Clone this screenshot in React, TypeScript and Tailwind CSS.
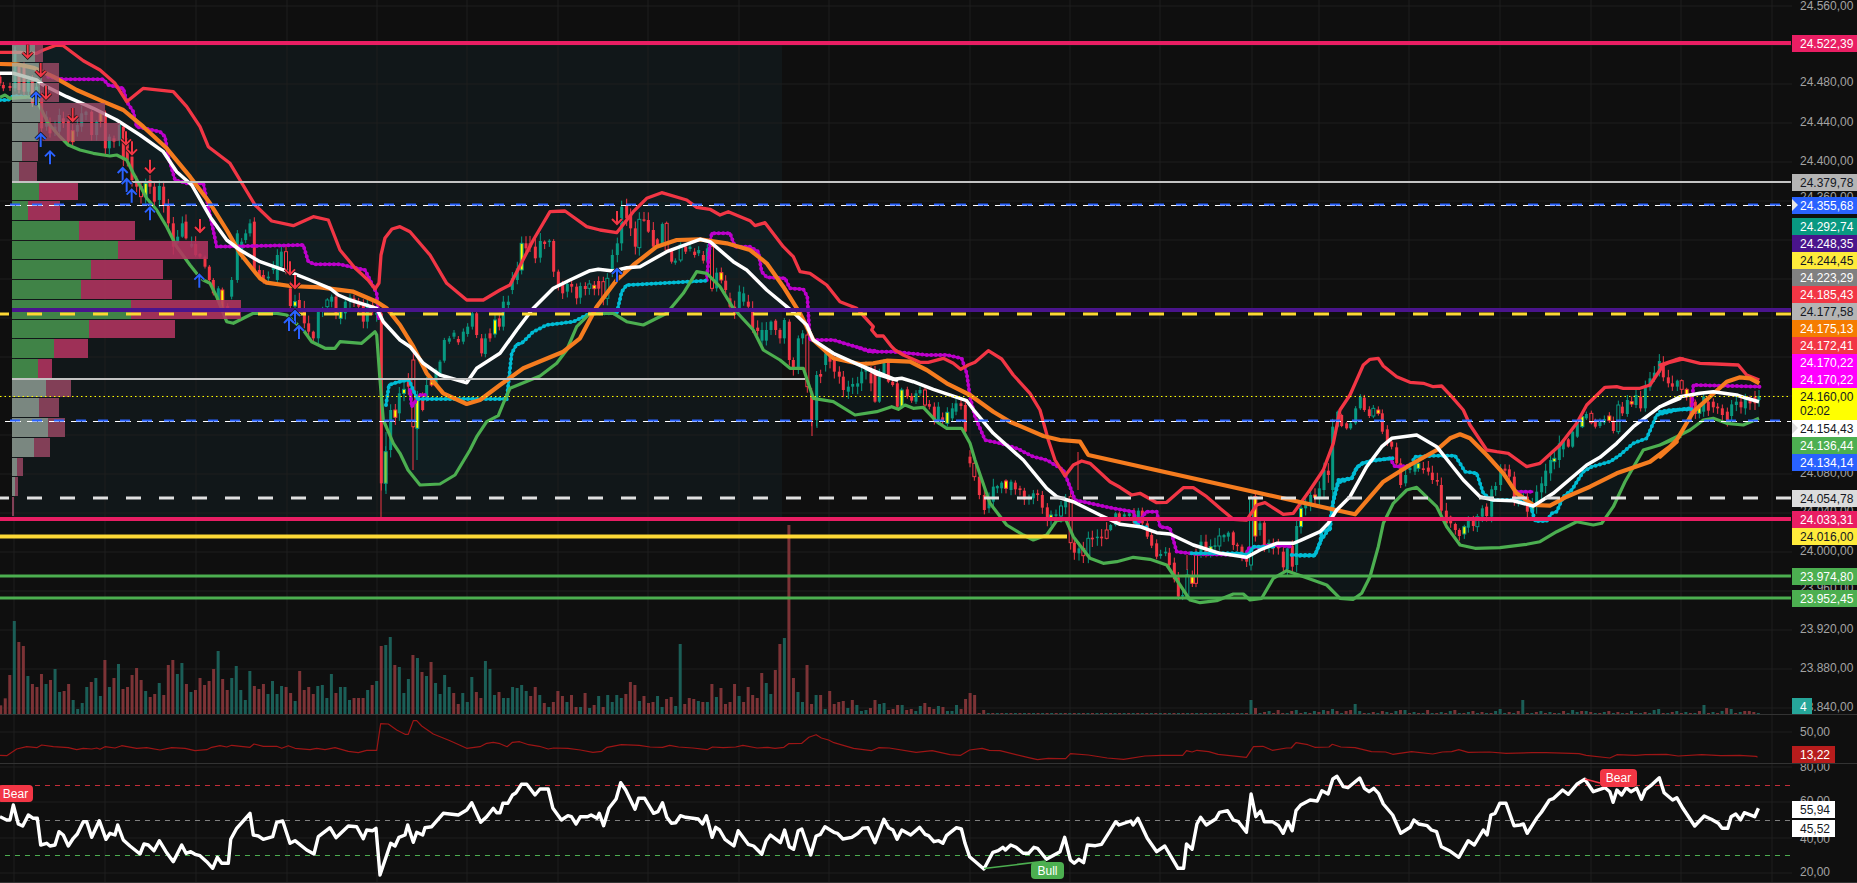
const font = "font-['Liberation_Sans',Arial,sans-serif]"

type Pt = [number, number]

// points were read from crops of the chart, so each run keeps its crop origin and scale
function pts(ox: number, sx: number, oy: number, sy: number, raw: number[]): Pt[] {
  const out: Pt[] = []
  for (let i = 0; i < raw.length; i += 2) out.push([ox + raw[i] / sx, oy + raw[i + 1] / sy])
  return out
}

const str = (p: Pt[]) => p.map(([x, y]) => `${x.toFixed(1)},${y.toFixed(1)}`).join(" ")

const redBand: Pt[] = [
  ...pts(0, 3, 20, 3, [0,97,60,97,110,100,130,90,170,75,190,77,250,122,300,150,345,190,380,245,430,205,520,215,560,260,600,320,625,380,690,430,765,555,815,603,880,617,940,590,985,600,1020,690]),
  ...pts(0, 1, 0, 1, [355,268,368,280,375,289,379,283,381,255,385,238,392,229]),
  ...pts(400, 3, 150, 3, [0,230,30,245,90,315,140,400,200,450,250,450,300,420,330,405,400,270,450,185,495,183,560,230,600,240,650,248,700,185,740,145,785,128,860,150,890,172,930,178,960,195,985,185,1050,212,1065,227,1095,218,1150,290,1180,320,1200,365,1230,370,1280,405,1320,455,1370,475,1420,530]),
  ...pts(860, 3, 330, 3, [35,0,50,18,70,18,95,50,105,60,130,75,180,97,205,97,250,85,280,100,302,118,325,105,345,97,385,62,425,87,460,135,510,190,540,240,565,330,585,390]),
  ...pts(900, 3, 380, 3, [495,288,520,255,545,243,570,250,630,305,660,322,695,345,720,340,770,368,800,367,825,345,850,323,880,323,920,350,960,385,1000,418,1040,420,1070,375,1095,368,1150,403,1180,400]),
  ...pts(1300, 3, 300, 3, [30,570,70,510,100,430,120,330,150,285,190,195,210,178,235,175,250,198,290,230,330,247,370,250,400,260,425,258,455,290,490,330,510,375,560,450,590,455,625,460,680,500,720,490,780,435,830,370,860,315,915,262,950,260,970,265,1020,265,1050,255,1090,195,1130,178,1150,177]),
  ...pts(1660, 3, 290, 3, [0,225,60,205,120,220,170,222,235,225,260,255,298,270]),
]

const greenBand: Pt[] = [
  ...pts(0, 3, 20, 3, [0,232,15,225,30,235,100,230,120,260,145,310,180,350,205,375,240,390,280,400,330,408,350,405,380,420,400,460,440,535,470,570,500,620,530,680,570,735,598,770]),
  ...pts(0, 3, 280, 3, [610,0,630,10,650,50,680,125,700,130,760,100,830,100,860,105,910,150,935,185,975,205,1005,205,1020,185,1085,190,1125,155,1130,165,1140,300,1150,420,1180,490,1200,520]),
  ...pts(0, 1, 0, 1, [408,470,420,485,440,484,455,475]),
  ...pts(400, 3, 150, 3, [210,900,230,860,260,815,295,797,310,760,330,715,420,678,470,640,500,600,530,530,570,490,640,490,680,515,730,525,800,490,850,430,890,365,920,370,960,410,1000,475,1060,540,1090,600,1140,630,1170,655,1210,655,1240,745,1300,755,1365,795,1430,785,1475,770]),
  ...pts(860, 3, 330, 3, [115,238,135,225,160,235,190,232,230,275,260,295,305,295,330,340,345,390]),
  ...pts(900, 3, 380, 3, [270,370,320,435,370,465,400,480,440,465,470,422,497,418,520,470,570,535,610,550,650,545,700,532,750,538,800,555,830,600,870,660,900,668,950,662,1000,642,1030,642,1050,660,1085,655,1120,595,1160,572,1230,597,1280,615,1320,655,1360,658,1385,640,1410,590]),
  ...pts(1300, 3, 300, 3, [235,740,250,670,280,610,320,570,350,562,410,620,440,680,480,735,525,745,600,743,680,733,720,725,770,695,830,665,880,675,905,670,940,620,975,545,1030,450,1080,435,1140,410]),
  ...pts(1660, 3, 290, 3, [0,465,50,440,90,420,130,390,160,385,200,400,250,405,297,385]),
]

const whiteMa: Pt[] = [
  ...pts(0, 3, 20, 3, [0,160,40,160,110,180,130,195,200,230,280,265,350,300,420,345,490,395,530,455,575,495,630,590,680,660,720,690,780,725,880,760]),
  ...pts(0, 3, 280, 3, [930,0,990,25,1015,45,1050,60,1130,85,1150,125]),
  ...pts(400, 3, 150, 3, [0,570,30,590,70,640,120,675,200,698,230,655,300,610,350,540,400,475,460,415,510,390,570,362,595,358,640,363,680,353,720,350,800,305,900,268,930,275,1000,335,1040,360,1100,420,1170,478,1220,525,1240,570,1300,610,1400,655,1440,675,1490,690]),
  ...pts(860, 3, 330, 3, [0,105,50,132,100,148,125,145,160,155,220,178,300,205,320,212,345,245,400,310,490,390]),
  ...pts(900, 3, 380, 3, [440,325,470,350,520,365,600,405,660,433,720,440,770,458,810,462,880,495,960,520,1040,532,1080,510,1130,490,1180,490]),
  ...pts(1300, 3, 300, 3, [0,722,60,695,85,670,110,630,150,590,200,500,245,440,275,415,350,405,410,440,490,540,540,590,580,600,640,602,700,618,760,580,860,495,900,472,950,430,1000,380,1080,320,1140,295]),
  ...pts(1660, 3, 290, 3, [0,350,60,320,120,310,160,305,230,315,260,325,297,335]),
]

const orangeMa: Pt[] = [
  ...pts(0, 3, 20, 3, [0,132,50,133,100,143,160,170,230,210,310,245,370,270,430,320,500,385,570,470,630,550,680,630,720,700,780,775]),
  ...pts(0, 3, 280, 3, [800,8,870,18,960,22,1060,35,1130,65,1160,85]),
  ...pts(400, 3, 150, 3, [0,525,40,590,80,670,130,730,200,762,240,750,300,705,370,655,430,630,490,605,540,565,590,470,650,390,700,345,770,290,830,270,900,268,980,280,1050,300,1100,340,1150,410,1200,490,1240,570,1300,625,1380,642,1420,640]),
  ...pts(860, 3, 330, 3, [80,92,150,95,200,120,260,160,330,195,400,245,450,275,550,318,600,330]),
  ...pts(900, 3, 380, 3, [540,185,565,225,1365,403]),
  ...pts(1300, 3, 300, 3, [250,545,330,495,410,450,450,415,480,403,510,415,560,465,610,520,650,580,700,615,750,617,800,590,870,560,950,520,1050,485,1130,425]),
  ...pts(1660, 3, 290, 3, [0,500,50,450,100,365,150,320,200,275,240,262,270,265,298,280]),
]

const cyanRuns: Pt[][] = [
  pts(0, 3, 20, 3, [0,240,25,240,40,228,100,232]),
  [[386, 405], [389, 385], [398, 382], [409, 380], [417, 399], [507, 399]],
  pts(400, 3, 150, 3, [320,748,335,610,350,583,365,580,400,545,440,525,520,515,570,490,650,490,665,425,680,405,920,392]),
  pts(900, 3, 380, 3, [705,425,720,440,740,442]),
  pts(900, 3, 380, 3, [875,520,1020,520,1045,525,1060,500,1125,500]),
  pts(900, 3, 380, 3, [1175,525,1245,525,1260,490,1265,452,1290,450,1300,360,1315,300,1355,295,1370,262,1385,252,1420,240,1480,235]),
  pts(1300, 3, 300, 3, [0,767,45,767,60,725,85,690,100,605,115,548,155,535,170,505,185,490,215,483,275,475]),
  pts(1300, 3, 300, 3, [340,480,345,470,400,467,465,467,480,490,495,515,530,520,550,580,575,600,640,600,690,610,705,663,740,663,755,640,770,635,790,590,815,570,850,515,875,500,930,485,960,465,1000,430,1040,415,1070,345,1130,330,1170,325]),
  pts(1660, 3, 290, 3, [0,365,30,360,95,358]),
]

const purpleRuns: Pt[][] = [
  pts(0, 3, 20, 3, [145,170,190,178,310,178,325,195,370,205,380,245,400,275,410,320,480,335,495,350,505,410,525,480,560,490,610,490,650,680,910,675,925,725,945,733,1020,733,1095,750,1130,820,1136,900]),
  pts(400, 3, 150, 3, [30,720,35,770,60,735,75,735]),
  pts(400, 3, 150, 3, [920,390,930,280,935,250,990,250,1005,290,1050,290,1075,305,1085,365,1100,382,1155,385,1170,415,1210,418,1222,440,1230,570,1300,570,1400,600,1430,603]),
  [
    ...pts(860, 3, 330, 3, [0,55,30,65,100,65,200,75,260,75,305,85,320,130,330,200,345,260,360,295,375,330,420,340,470,355,520,380,560,390]),
    ...pts(900, 3, 380, 3, [490,270,510,320,525,360,640,385,700,395,712,435,738,395,770,395,780,440,810,445,830,515,890,522,1020,525,1035,535,1045,505,1120,495,1175,500]),
  ],
  pts(1300, 3, 300, 3, [270,475,285,500,330,497]),
  pts(1300, 3, 300, 3, [650,575,700,575]),
  pts(1660, 3, 290, 3, [95,370,100,285,300,290]),
]

const rsi: Pt[] = [
  ...pts(0, 3, 600, 3, [0,650,20,660,30,660,40,615,55,672,68,678,85,645,100,655,112,655,122,735,140,730,150,738,165,735,177,695,190,705,205,738,220,715,232,702,250,665,260,665,275,712,298,662,318,718,330,700,345,705,353,675,370,720,390,738,420,762,432,732,445,735,462,752,478,722,498,755,520,785,545,735,558,760,572,755,585,763,600,767,620,785,638,805,652,772,665,790,685,790,692,718,710,685,750,640,760,705,775,708,790,718,818,710,830,667,848,663,870,730,885,722,920,750,942,762,955,710,990,683,1008,713,1045,678,1070,680,1090,716,1100,690,1118,692,1128,685,1140,825,1172,730,1185,738,1197,712,1215,705,1223,675,1240,727,1250,697,1268,705,1275,683,1295,680,1330,640,1375,645,1400,630,1415,608,1442,667,1460,650,1480,625,1490,638]),
  ...pts(500, 2.8, 600, 3, [0,638,8,610,22,610,35,585,45,578,60,553,75,553,98,585,112,567,135,567,148,625,172,660,190,647,200,650,213,672,225,650,245,650,255,645,272,655,278,640,290,677,305,625,325,597,338,548,352,570,378,628,388,595,405,595,430,640,442,635,455,608,467,652,480,670,492,668,505,647,520,652,540,655,555,657,567,672,578,647,594,712,604,682,615,690,630,718,655,738,667,692,695,733,710,738,733,763,745,722,757,705,785,728,797,690,810,740,822,748,835,692,845,687,870,765,885,708,897,703,910,680,935,697,945,700,960,717,985,712,1002,700,1015,685,1030,683,1050,728,1075,658,1088,683,1100,690,1112,718,1125,690,1150,705,1175,682,1190,703,1200,707,1215,725,1228,722,1240,730,1250,707,1278,683,1292,687,1302,730,1315,770,1355,807,1380,757,1395,752,1408,742,1415,750,1430,735,1445,742,1465,760,1480,760,1495,742,1505,745,1530,778]),
  ...pts(1060, 2.119, 600, 3, [0,755,10,712,22,780,30,790,40,778,50,788,58,735,75,737,88,733,105,695,118,665,125,675,150,663,155,675,165,655,185,715,205,755,222,738,250,805,262,805,268,732,280,748,290,672,298,652,310,675,330,657,338,637,355,632,367,660,378,665,395,697,405,582,415,650,425,633,433,665,450,665,463,677,473,700,483,665,492,692,500,632,510,615,530,600,545,603,555,572,568,582,578,537,587,529,600,560,610,563,635,534,645,565,655,575,665,565,675,580,685,612,705,645,722,700,742,682,750,660,760,672,778,677,787,690,798,695,808,740,825,752,845,772,865,722,878,735,897,690,905,705,913,645,922,640,932,610,945,610,962,677,975,675,982,672,990,700,1010,655,1020,637,1037,600,1045,596,1065,570,1077,583,1095,553,1112,538,1130,575,1155,563,1165,575,1172,607,1180,570,1190,585,1200,563,1210,575,1222,565,1232,598,1240,570,1255,553,1270,533,1280,578,1298,600,1307,593,1320,625,1345,678,1365,648,1380,658,1395,670,1403,685,1415,685,1422,650,1432,642,1442,660,1450,638,1472,650,1480,625]),
]

const atr: Pt[] = [
  ...pts(0, 3, 600, 3, [0,466,20,467,50,447,80,440,110,443,125,435,160,440,205,443,230,449,250,445,275,447,290,444,300,448,315,440,345,444,365,437,410,445,440,443,480,450,515,443,555,445,585,452,620,449,635,442,660,437,680,441,695,436,750,442,762,432,790,439,830,439,845,445,865,437,885,445,930,449,950,445,975,449,1005,443,1045,454,1075,458,1100,451,1130,451,1142,371,1165,372,1190,390,1215,403,1225,403,1240,362,1250,362,1265,378,1300,402,1350,422,1400,445,1440,440,1460,430,1480,427]),
  ...pts(500, 2.8, 600, 3, [0,431,20,440,35,427,55,425,80,434,110,439,135,447,150,444,190,445,225,450,260,457,285,454,300,442,340,434,390,436,420,441,455,442,475,436,500,441,540,444,580,449,595,441,625,443,660,441,680,436,720,444,750,442,770,445,795,442,808,431,845,430,865,412,885,404,900,414,920,420,935,428,990,445,1040,452,1060,443,1090,444,1165,457,1210,452,1260,464,1290,466,1315,450,1350,445,1370,451,1400,452,1480,473,1505,479,1535,475]),
  ...pts(1060, 2.119, 600, 3, [0,476,12,476,22,461,60,465,100,474,135,478,180,468,215,466,260,466,268,452,280,456,290,451,315,455,335,463,395,472,410,440,430,439,450,451,480,444,490,444,500,428,525,434,540,442,570,441,577,433,595,441,625,443,660,455,690,456,705,463,745,455,790,462,810,456,830,455,845,449,865,457,910,456,945,460,1000,458,1030,458,1100,461,1115,466,1165,474,1180,464,1220,466,1240,464,1285,463,1310,468,1360,464,1400,467,1440,466,1475,469,1478,472]),
]

// body runs: crop x, body top, body bottom, kind
// r g filled, R G hollow, y yellow body in green, o yellow body in red
const candleRuns: { ox: number; oy: number; s: string }[] = [
  { ox: 0, oy: 20, s: "0,170,190,r 10,195,205,r 30,198,204,r 45,90,205,g 57,140,210,r 72,140,215,r 85,180,215,g 97,180,250,r 110,200,240,g 125,230,325,r 140,290,320,g 150,310,340,r 165,320,335,g 178,285,335,g 190,295,310,r 205,303,365,r 218,332,365,o 232,315,335,g 245,280,320,g 258,275,285,g 275,275,345,r 290,305,345,g 302,280,305,o 316,278,385,r 328,350,385,g 342,355,365,r 358,315,360,g 370,320,420,r 382,365,420,r 396,410,480,r 410,480,500,r 423,500,530,R 437,490,530,y 450,480,500,r 463,500,545,r 478,498,540,g 491,500,555,r 505,555,610,r 520,610,680,r 533,650,668,g 547,610,650,g 558,605,655,r 575,672,680,g 587,672,705,r 600,702,710,r 615,710,740,r 628,740,780,r" },
  { ox: 0, oy: 280, s: "640,0,40,r 655,25,60,g 667,30,85,o 683,78,84,r 695,0,50,g 712,-140,0,g 725,-115,-70,g 737,-140,-120,g 750,-170,-140,g 763,-175,-30,r 778,-30,-10,r 790,-15,0,r 805,-10,-5,g 820,-40,-30,g 832,-75,0,g 844,-85,-40,g 858,-85,-30,R 871,25,78,r 885,65,78,y 898,60,85,r 913,85,130,r 926,130,155,r 940,155,175,r 955,95,175,g 968,85,95,g 982,60,80,G 995,50,65,g 1008,50,100,r 1022,95,115,y 1036,65,100,g 1050,52,65,g 1062,55,62,r 1076,65,80,r 1090,70,125,r 1102,70,125,g 1118,75,85,r 1130,98,104,g 1144,100,610,r 1157,515,610,y 1172,390,510,g 1186,390,412,o 1198,340,400,g" },
  { ox: 400, oy: 150, s: "12,718,730,y 25,690,710,r 40,630,830,R 52,745,835,y 68,750,780,r 80,705,750,g 95,695,705,o 108,660,705,g 120,635,675,g 133,570,632,g 148,565,575,g 162,548,560,g 175,567,577,r 190,545,575,g 203,530,552,g 217,490,530,g 230,490,555,r 245,565,610,r 256,565,612,g 270,550,565,r 285,510,552,y 298,505,530,r 310,455,530,g 325,455,465,g 337,385,420,g 352,355,390,g 365,280,360,y 378,280,295,r 390,280,292,r 406,290,325,r 421,273,323,g 434,275,282,r 448,272,275,g 461,273,365,r 475,365,405,r 488,400,430,r 502,402,425,g 515,402,410,r 530,410,445,r 541,408,443,g 556,408,417,r 568,402,415,G 583,406,416,o 596,393,416,r 610,395,445,R 622,385,445,G 637,315,360,g 652,280,315,g 665,170,280,g 680,165,205,r 692,195,235,r 706,235,290,r 718,208,293,G 732,208,212,r 745,210,245,r 760,240,290,r 772,268,285,r 787,222,280,g 800,220,300,R 815,300,335,r 826,332,338,g 842,285,330,G 857,290,305,r 870,290,297,g 884,305,315,r 896,300,310,g 910,315,332,r 922,295,335,g 936,290,415,R 950,368,415,g 964,368,390,o 977,392,420,r 990,445,470,r 1004,470,495,r 1018,425,475,g 1031,430,455,g 1045,455,470,r 1058,475,535,r 1073,533,543,r 1086,540,572,g 1099,540,572,g 1113,515,540,g 1127,512,540,r 1140,540,565,r 1153,510,565,g 1168,515,630,r 1180,630,660,r 1195,565,655,g 1208,550,565,g 1222,555,710,R 1235,725,810,r 1250,675,810,g 1262,672,680,r 1277,610,645,g 1290,610,635,r 1303,630,665,r 1318,665,680,r 1330,680,720,r 1345,710,725,g 1358,702,710,g 1373,700,710,g 1385,665,700,g 1398,655,665,g 1413,670,700,r 1425,670,755,r 1438,680,755,g 1452,630,670,g 1465,635,695,r 1478,695,705,r 1492,700,770,r" },
  { ox: 900, oy: 380, s: "5,30,80,y 22,28,50,r 35,48,62,r 48,40,65,g 60,30,40,g 75,30,75,R 88,72,80,r 103,80,125,r 115,80,125,g 128,112,125,r 142,97,130,y 157,85,115,g 168,70,95,g 183,70,78,r 196,75,155,r 210,230,250,r 223,250,290,R 238,290,345,r 253,345,390,r 267,360,385,g 280,320,365,g 292,318,325,g 305,308,325,g 318,303,325,o 333,305,330,g 346,308,328,r 360,325,330,r 373,332,358,r 387,353,357,g 400,340,355,g 413,340,345,r 427,345,383,r 442,382,420,r 453,405,418,y 468,403,407,g 483,378,408,G 497,358,382,g 512,350,488,R 523,488,518,r 537,505,520,g 550,505,527,R 565,475,527,G 577,473,478,r 592,470,474,g 605,470,475,r 620,450,475,R 632,435,450,g 647,400,435,g 658,400,425,r 673,403,410,g 688,400,408,g 702,392,430,r 715,392,430,g 727,392,430,r 742,430,470,r 755,465,497,r 770,490,530,r 782,522,528,g 797,515,520,g 808,518,555,r 823,548,598,r 835,592,650,r 848,645,650,g 862,585,650,G 877,590,610,o 888,525,610,R 903,485,522,g 918,485,520,r 932,500,520,y 945,496,500,g 958,468,498,G 972,465,472,g 985,458,470,g 1000,457,495,r 1012,494,498,r 1026,500,528,r 1040,525,545,r 1053,355,555,G 1066,350,468,o 1080,430,450,g 1093,428,498,r 1107,490,500,y 1120,488,505,r 1135,490,505,r 1150,515,562,r 1162,505,568,g 1177,497,560,r 1190,438,555,g" },
  { ox: 1300, oy: 300, s: "3,625,680,y 17,610,625,g 32,585,612,g 45,585,592,o 58,565,595,g 72,510,570,g 85,512,525,r 98,380,570,g 113,335,380,g 125,345,378,r 140,370,385,r 152,370,385,g 167,325,370,g 181,290,325,g 193,293,330,r 208,328,348,r 220,325,348,G 235,330,340,o 247,340,395,r 262,388,430,r 275,425,440,r 290,442,490,r 302,490,555,r 317,525,550,g 330,503,510,g 345,485,515,g 355,490,505,y 370,505,510,r 385,503,515,r 397,518,540,r 412,540,545,r 424,555,632,r 439,632,670,r 452,650,670,r 466,672,690,r 478,690,708,r 493,680,702,y 505,655,683,g 520,655,678,r 532,650,680,G 547,625,650,g 560,620,648,r 575,568,650,g 587,558,570,g 602,505,555,g 615,506,512,r 628,508,530,r 643,530,598,r 655,595,600,g 670,588,593,g 682,590,635,r 697,612,632,y 710,575,620,g 725,550,577,g 737,512,558,g 752,480,520,g 763,475,485,y 778,430,480,g 790,420,448,g 805,418,440,r 818,395,440,g 832,370,410,g 847,350,380,y 859,342,355,g 874,340,368,R 886,365,380,r 900,365,378,g 913,357,368,g 928,348,362,o 940,362,393,r 955,315,395,G 967,320,340,r 982,300,342,g 995,305,312,o 1008,285,315,g 1022,290,325,r 1036,260,325,g 1050,235,262,g 1063,218,235,g 1078,183,218,g" },
  { ox: 1660, oy: 290, s: "10,220,262,r 25,262,280,r 37,280,290,r 52,272,290,g 65,272,298,R 80,298,318,o 93,320,375,r 106,335,372,r 118,350,370,y 131,320,365,g 145,335,362,r 160,335,352,r 173,350,355,r 187,355,375,r 202,365,392,r 215,343,378,g 229,335,345,g 243,335,352,r 256,327,355,g 270,333,340,r 285,320,340,r 297,318,330,g" },
]

const extraWicks: [number, number, number, string][] = [
  [381, 483, 517, "#f23645"], [386, 432, 494, "#089981"], [413, 427, 470, "#f23645"], [417, 428, 460, "#089981"],
  [812, 420, 436, "#f23645"], [817, 420, 428, "#089981"], [1078, 452, 490, "#f23645"], [1187, 555, 570, "#f23645"],
]

const GREEN = "#089981"
const RED = "#f23645"

function Candles() {
  let n = 0
  const out: React.ReactNode[] = []
  candleRuns.forEach((run) => {
    run.s.split(" ").forEach((c) => {
      const [sx, sa, sb, k] = c.split(",")
      const x = run.ox + Number(sx) / 3
      const a = run.oy + Number(sa) / 3
      const b = run.oy + Number(sb) / 3
      n++
      const r1 = ((n * 9301 + 49297) % 233280) / 233280
      const r2 = ((n * 4561 + 51349) % 233280) / 233280
      const line = k === "r" || k === "R" || k === "o" ? RED : GREEN
      const fill = k === "r" ? RED : k === "g" ? GREEN : k === "y" || k === "o" ? "#ffff00" : "none"
      out.push(
        <g key={n}>
          <line x1={x} x2={x} y1={a - 1 - r1 * 7} y2={b + 1 + r2 * 7} stroke={line} strokeWidth="1" />
          <rect x={x - 1.5} y={a} width="3" height={Math.max(b - a, 1.5)} fill={k === "R" || k === "G" ? "#0f1518" : fill} stroke={k === "r" || k === "g" ? "none" : line} strokeWidth="1" />
        </g>,
      )
    })
  })
  return <g>{out}</g>
}

// volume, left to right at a 4.53px pitch: top of bar as read in the crop, then colour
const volA = "r316 r295 r225 g63 r126 r138 g228 r252 r261 r222 g252 r240 g207 g276 r273 r252 g300 g327 g309 g261 r246 g234 g288 r180 g261 r234 g192 r267 r261 r225 r204 r240 g273 r291 r282 g249 r285 r195 r180 g222 g189 r252 g276 r270 r234 r255 r243 r207 g153 r237 r270 g234 g198 g270 g300 g213 r258 r267 r252 g282 g243 g282 g258 r261 r279 g303 r213 r270 r261 r282 g258 g255 g294 g222 r279 g261 g261 g300 r294 r294 r294 g270 r255 g243 r138 g135 g111 r195 g201 g279 g237 r165 g174 r216 g228 r186 g249 g282 g225 g261 r279 r312 g279 g306 g231 r276 r294 g183 g207 g285 r276"
const volB = "g294 g294 g261 g264 g255 g273 r288 r261 g285 r309 g321 r306 r273 r288 g306 r285 r321 g321 r279 g324 r315 g288 r321 g285 g306 g285 g294 r282 r246 r255 g303 r288 r309 r306 g288 g321 r297 r291 g318 g132 r312 r294 r297 g303 r306 g306 r252 g291 r264 r312 r306 r252 g288 r306 r261 r285 r294 r219 g249 g282 r210 r132 g114 r-225 r234 g276 g306 r195 r312 g285 r285 g327 r273 r312 r306 r303 g324 r300 g315 g333 g330 r324 r300 g312 g309 r330 r327 r315 g315 r330 r327 g333 g318 r309 r321 r327 g318 r321 g333 g333 g315 r327 r297 r279 r285 r339 r330"

const volTail: Record<number, [string, number]> = {
  1250: ["g", 14], 1255: ["r", 6], 1277: ["r", 4], 1291: ["r", 3], 1296: ["g", 4], 1323: ["g", 4], 1327: ["r", 3], 1332: ["g", 5], 1346: ["r", 3], 1350: ["r", 4], 1355: ["g", 10], 1373: ["r", 2], 1396: ["g", 3], 1400: ["r", 4], 1405: ["g", 4], 1427: ["r", 4], 1454: ["r", 4], 1500: ["g", 5], 1522: ["g", 14], 1572: ["g", 4], 1581: ["r", 3], 1653: ["g", 4], 1658: ["g", 5], 1699: ["r", 3], 1704: ["g", 9], 1727: ["r", 6], 1731: ["g", 5], 1749: ["r", 3],
}

function Volume() {
  const out: React.ReactNode[] = []
  const bar = (i: number, x: number, top: number, c: string) =>
    out.push(<rect key={i} x={x - 1.5} y={top} width="3" height={714 - top} fill={c === "r" ? "#7c3336" : "#1b5e57"} />)
  let i = 0
  volA.split(" ").forEach((v) => {
    bar(i, 0.7 + i * 4.53, 600 + Number(v.slice(1)) / 3, v[0])
    i++
  })
  volB.split(" ").forEach((v) => {
    bar(i, 0.7 + i * 4.53, 600 + Number(v.slice(1)) / 3, v[0])
    i++
  })
  const tailKeys = Object.keys(volTail).map(Number)
  while (0.7 + i * 4.53 < 1759) {
    const x = 0.7 + i * 4.53
    const hit = tailKeys.find((k) => Math.abs(k - x) < 2.3)
    if (hit) bar(i, x, 714 - volTail[hit][1], volTail[hit][0])
    else bar(i, x, x < 1250 ? 713 : 713 - (i % 5 === 0 ? 2 : i % 3 === 0 ? 1 : 0), i % 2 ? "r" : "g")
    i++
  }
  return <g>{out}</g>
}

// volume profile rows: top, bottom, end of buy part, end of sell part, faded
const profile: [number, number, number, number, boolean][] = [
  [44, 62, 35, 43, true], [63, 82, 42, 59, true], [83, 102, 40, 59, true], [103, 122, 40, 105, true], [123, 141, 38, 120, true], [142, 161, 22, 38, true], [162, 181, 19, 37, true],
  [183, 200, 39, 78, false], [201, 220, 28, 60, false], [221, 240, 79, 135, false], [241, 259, 118, 208, false], [260, 279, 91, 163, false], [280, 299, 81, 172, false], [300, 319, 131, 241, false], [320, 338, 89, 175, false], [339, 358, 54, 88, false], [359, 378, 38, 52, false],
  [380, 397, 46, 71, true], [398, 417, 39, 59, true], [418, 437, 48, 65, true], [438, 457, 34, 50, true], [458, 476, 17, 23, true], [477, 496, 15, 18, true], [497, 516, 12, 14, true],
]

const arrows: [number, number, "u" | "d"][] = [
  ...([[83,95],[122,150],[138,218],[218,285],[378,355],[396,385],[450,440],[600,618],[870,745]] as Pt[]).map(([x, y]): [number, number, "d"] => [x / 3, 20 + y / 3, "d"]),
  ...([[108,235],[122,360],[150,412],[368,462],[380,495],[395,527],[450,580],[598,782]] as Pt[]).map(([x, y]): [number, number, "u"] => [x / 3, 20 + y / 3, "u"]),
  [295, 282, "d"], [295, 317, "u"], [289, 324, "u"], [299, 332, "u"],
  [617, 218, "d"], [617, 275, "u"],
]

function Arrow({ x, y, dir }: { x: number; y: number; dir: "u" | "d" }) {
  const d = dir === "d" ? `M${x} ${y - 7}V${y + 6}M${x - 5} ${y + 1}L${x} ${y + 6}L${x + 5} ${y + 1}` : `M${x} ${y + 7}V${y - 6}M${x - 5} ${y - 1}L${x} ${y - 6}L${x + 5} ${y - 1}`
  return (
    <g fill="none">
      <path d={d} stroke="#131313" strokeWidth="3.4" />
      <path d={d} stroke={dir === "d" ? "#f23645" : "#2962ff"} strokeWidth="2" />
    </g>
  )
}

const gridX = [14, 105, 196, 287, 377, 467, 558, 648, 739, 829, 970, 1070, 1160, 1252, 1319, 1409, 1500, 1591, 1681, 1772]
const gridY = [6, 45, 84, 123, 162, 201, 240, 279, 318, 357, 396, 435, 474, 513, 552, 591, 630, 669, 708]

function MainPane() {
  const band = str([...redBand, ...[...greenBand].reverse()])
  return (
    <svg viewBox="0 0 1792 714" className="block h-[714px] w-[1792px]">
      <rect x="12" y="45" width="770" height="472" fill="#111719" />
      <polygon points={band} fill="#0096c8" fillOpacity="0.05" />
      {gridX.map((x) => <line key={x} x1={x} x2={x} y1="0" y2="714" stroke="#1e1e1e" />)}
      {gridY.map((y) => <line key={y} x1="0" x2="1792" y1={y} y2={y} stroke="#1e1e1e" />)}
      <Volume />
      <Candles />
      {extraWicks.map(([x, a, b, c], i) => <line key={i} x1={x} x2={x} y1={a} y2={b} stroke={c} />)}
      {purpleRuns.map((r, i) => (
        <g key={i} fill="none" stroke="#bd00cc" strokeLinejoin="round">
          <polyline points={str(r)} strokeWidth="2.4" />
          <polyline points={str(r)} strokeWidth="4" strokeLinecap="round" strokeDasharray="0 4.5" />
        </g>
      ))}
      {cyanRuns.map((r, i) => (
        <g key={i} fill="none" stroke="#00bcd4" strokeLinejoin="round">
          <polyline points={str(r)} strokeWidth="2.4" />
          <polyline points={str(r)} strokeWidth="4" strokeLinecap="round" strokeDasharray="0 4.5" />
        </g>
      ))}
      <polyline points={str(greenBand)} fill="none" stroke="#4caf50" strokeWidth="3.2" strokeLinejoin="round" />
      <polyline points={str(redBand)} fill="none" stroke="#f23645" strokeWidth="3.3" strokeLinejoin="round" />
      <polyline points={str(orangeMa)} fill="none" stroke="#f57c1f" strokeWidth="4.2" strokeLinejoin="round" />
      <polyline points={str(whiteMa)} fill="none" stroke="#ffffff" strokeWidth="3.5" strokeLinejoin="round" />
      {profile.map(([a, b, g, p, faded], i) => (
        <g key={i}>
          <rect x="12" y={a} width={g - 12} height={b - a} fill={faded ? "#a3b3a8" : "#43894a"} fillOpacity={faded ? 0.72 : 0.95} />
          <rect x={g} y={a} width={p - g} height={b - a} fill={faded ? "#a84d6c" : "#b23460"} fillOpacity={faded ? 0.75 : 0.88} />
        </g>
      ))}
      <line x1="0" x2="1791" y1="43" y2="43" stroke="#e91e63" strokeWidth="4" />
      <line x1="0" x2="1791" y1="519" y2="519" stroke="#e91e63" strokeWidth="4" />
      <line x1="0" x2="1067" y1="536.5" y2="536.5" stroke="#fdd835" strokeWidth="4" />
      <line x1="0" x2="1791" y1="576" y2="576" stroke="#4caf50" strokeWidth="3" />
      <line x1="0" x2="1791" y1="598" y2="598" stroke="#4caf50" strokeWidth="3" />
      <line x1="12" x2="1791" y1="182" y2="182" stroke="#c4c4c4" strokeWidth="2" />
      <line x1="12" x2="805" y1="379" y2="379" stroke="#c4c4c4" strokeWidth="2" />
      <line x1="0" x2="1791" y1="396.5" y2="396.5" stroke="#ffff00" strokeWidth="1" strokeDasharray="1.5 3" />
      <line x1="0" x2="1791" y1="314" y2="314" stroke="#fdd835" strokeWidth="3" strokeDasharray="15 18" strokeDashoffset="6" />
      <line x1="12" x2="1791" y1="310" y2="310" stroke="#4a148c" strokeWidth="4" />
      <line x1="0" x2="1791" y1="498" y2="498" stroke="#e0e0e0" strokeWidth="3" strokeDasharray="15 18" strokeDashoffset="6" />
      {[205, 421].map((y) => (
        <g key={y}>
          <line x1="5" x2="1791" y1={y + 0.5} y2={y + 0.5} stroke="#ffffff" strokeWidth="1" strokeDasharray="10 1 5 6" />
          <line x1="0" x2="1791" y1={y - 0.5} y2={y - 0.5} stroke="#2962ff" strokeWidth="2" strokeDasharray="10 12" strokeDashoffset="-10" />
        </g>
      ))}
      {arrows.map(([x, y, dir], i) => <Arrow key={i} x={x} y={y} dir={dir} />)}
    </svg>
  )
}

function AtrPane() {
  return (
    <svg viewBox="0 715 1792 48" className="block h-12 w-[1792px]">
      {gridX.map((x) => <line key={x} x1={x} x2={x} y1="714" y2="763" stroke="#1e1e1e" />)}
      <line x1="0" x2="1792" y1="732" y2="732" stroke="#1e1e1e" />
      <polyline points={str(atr)} fill="none" stroke="#9c1515" strokeWidth="1.2" strokeLinejoin="round" />
    </svg>
  )
}

function RsiPane() {
  return (
    <svg viewBox="0 764 1792 118" className="block h-[118px] w-[1792px]">
      {gridX.map((x) => <line key={x} x1={x} x2={x} y1="763" y2="883" stroke="#1e1e1e" />)}
      {[767, 802, 838, 873].map((y) => <line key={y} x1="0" x2="1792" y1={y} y2={y} stroke="#1e1e1e" />)}
      <line x1="5" x2="1791" y1="785.5" y2="785.5" stroke="#f23645" strokeOpacity="0.8" strokeDasharray="5 5" />
      <line x1="5" x2="1791" y1="820.5" y2="820.5" stroke="#808080" strokeDasharray="5 5" />
      <line x1="5" x2="1791" y1="855.5" y2="855.5" stroke="#4caf50" strokeDasharray="5 5" />
      <polyline points={str(rsi)} fill="none" stroke="#ffffff" strokeWidth="3.4" strokeLinejoin="round" />
      <line x1="984" x2="1046" y1="868.5" y2="861" stroke="#4caf50" strokeWidth="1.5" />
      <line x1="1585" x2="1600" y1="779" y2="783" stroke="#f23645" strokeWidth="1.5" />
    </svg>
  )
}

// tags that touch on the price scale, one stack each
const stackA: [string, string][] = [
  ["24.292,74", "bg-[#089981] text-white"],
  ["24.248,35", "bg-[#4a148c] text-white"],
  ["24.244,45", "bg-[#ffeb3b] text-[#131722]"],
  ["24.223,29", "bg-[#808080] text-white"],
  ["24.185,43", "bg-[#f23645] text-white"],
  ["24.177,58", "bg-[#b4b4b4] text-[#131722]"],
  ["24.175,13", "bg-[#f57c00] text-white"],
  ["24.172,41", "bg-[#f23645] text-white"],
  ["24.170,22", "bg-[#ff00ff] text-white"],
  ["24.170,22", "bg-[#ff00ff] text-white"],
]
const stackB: [string, string][] = [
  ["24.154,43", "bg-white text-[#131722]"],
  ["24.136,44", "bg-[#4caf50] text-white"],
  ["24.134,14", "bg-[#2962ff] text-white"],
]

const ticks: [string, number][] = [
  ["24.560,00", 6], ["24.480,00", 82], ["24.440,00", 122], ["24.400,00", 161], ["24.360,00", 197], ["24.080,00", 473], ["24.040,00", 511], ["24.000,00", 551], ["23.960,00", 588], ["23.920,00", 629], ["23.880,00", 668], ["23.840,00", 707],
]

function Tick({ text, y }: { text: string; y: number }) {
  return <div className="absolute left-2 text-xs leading-none text-[#a3a3a3]" style={{ top: y - 6 }}>{text}</div>
}

function Tag({ text, tone }: { text: string; tone: string }) {
  return <div className={`flex h-[17px] items-center pl-2 text-xs leading-none ${tone}`}>{text}</div>
}

function Marker({ fill }: { fill: string }) {
  return (
    <svg viewBox="0 0 7 12" className="absolute left-0 top-[2px] h-3 w-[7px]">
      <polygon points="0,0 6,6 0,12" fill={fill} />
    </svg>
  )
}

export default function App() {
  return (
    <div className={`flex h-[883px] w-[1857px] overflow-hidden bg-[#0f0f0f] ${font}`}>
      <div className="w-[1792px] shrink-0">
        <MainPane />
        <div className="h-[49px] border-t border-[#333333]">
          <AtrPane />
        </div>
        <div className="relative h-[120px] border-y border-[#333333]">
          <RsiPane />
          <div className="absolute left-[-2px] top-[21px] flex h-[17px] w-[35px] items-center justify-center rounded-sm bg-[#f23645] text-xs text-white">Bear</div>
          <div className="absolute left-[1600px] top-[5px] flex h-[18px] w-[37px] items-center justify-center rounded-sm bg-[#f23645] text-xs text-white">Bear</div>
          <div className="absolute left-[1031px] top-[98px] flex h-[17px] w-[33px] items-center justify-center rounded-sm bg-[#4caf50] text-xs text-white">Bull</div>
        </div>
      </div>
      <div className="w-[65px] shrink-0">
        <div className="relative h-[714px] overflow-hidden">
          {ticks.map(([t, y]) => <Tick key={t} text={t} y={y} />)}
          <div className="absolute left-0 top-[35px] w-full"><Tag text="24.522,39" tone="bg-[#e91e63] text-white" /></div>
          <div className="absolute left-0 top-[174px] w-full"><Tag text="24.379,78" tone="bg-[#b4b4b4] text-[#131722]" /></div>
          <div className="absolute left-0 top-[197px] w-full">
            <Tag text="24.355,68" tone="bg-[#2962ff] text-white" />
            <Marker fill="#e6e6e6" />
          </div>
          <div className="absolute left-0 top-[218px] flex w-full flex-col">
            {stackA.map(([t, tone], i) => <Tag key={i} text={t} tone={tone} />)}
            <div className="flex h-8 flex-col justify-center bg-[#ffff00] pl-2 text-xs leading-[14px] text-[#131722]">
              <span>24.160,00</span>
              <span>02:02</span>
            </div>
            <div className="relative">
              {stackB.map(([t, tone], i) => <Tag key={i} text={t} tone={tone} />)}
              <Marker fill="#dcdcdc" />
            </div>
          </div>
          <div className="absolute left-0 top-[490px] w-full"><Tag text="24.054,78" tone="bg-[#dcdcdc] text-[#131722]" /></div>
          <div className="absolute left-0 top-[511px] flex w-full flex-col">
            <Tag text="24.033,31" tone="bg-[#e91e63] text-white" />
            <Tag text="24.016,00" tone="bg-[#ffeb3b] text-[#131722]" />
          </div>
          <div className="absolute left-0 top-[568px] w-full"><Tag text="23.974,80" tone="bg-[#4caf50] text-white" /></div>
          <div className="absolute left-0 top-[590px] w-full"><Tag text="23.952,45" tone="bg-[#4caf50] text-white" /></div>
          <div className="absolute left-0 top-[698px] w-5"><Tag text="4" tone="bg-[#26a69a] text-white" /></div>
        </div>
        <div className="relative h-[49px] overflow-hidden border-t border-[#333333]">
          <Tick text="50,00" y={17} />
          <div className="absolute left-0 top-[31px] w-[43px]"><Tag text="13,22" tone="bg-[#b71c1c] text-white" /></div>
        </div>
        <div className="relative h-[120px] overflow-hidden border-y border-[#333333]">
          <Tick text="80,00" y={3} />
          <Tick text="60,00" y={37} />
          <Tick text="40,00" y={75} />
          <Tick text="20,00" y={108} />
          <div className="absolute left-0 top-[37px] flex w-[43px] flex-col gap-[2px]">
            <Tag text="55,94" tone="bg-white text-[#131722]" />
            <Tag text="45,52" tone="bg-white text-[#131722]" />
          </div>
        </div>
      </div>
    </div>
  )
}
